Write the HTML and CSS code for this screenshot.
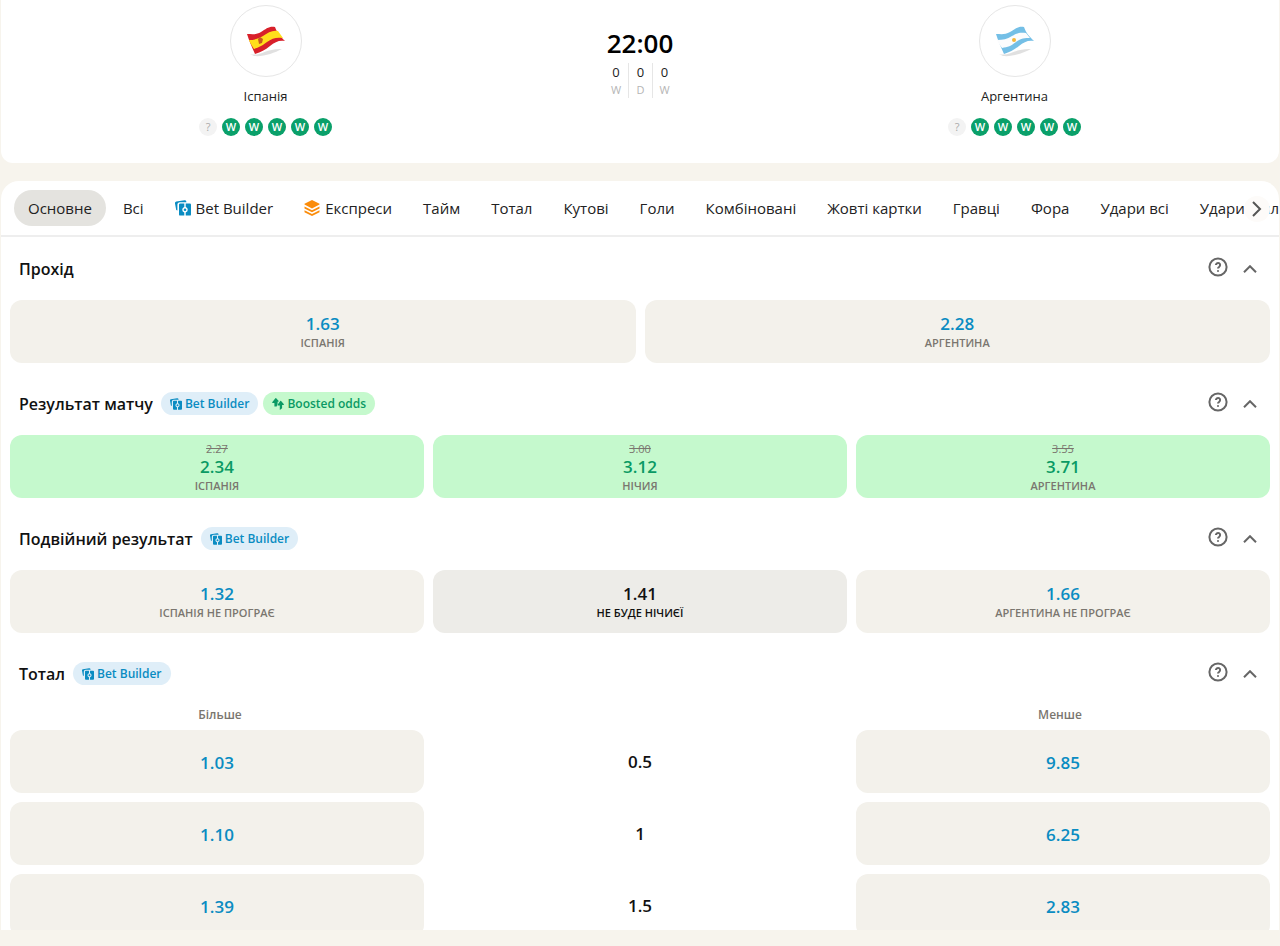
FILE: index.html
```
<!DOCTYPE html>
<html lang="uk">
  <head>
    <meta charset="UTF-8" />
    <meta name="viewport" content="width=device-width, initial-scale=1.0" />
    <title>Іспанія – Аргентина</title>
    <link rel="stylesheet" href="styles.css">
  </head>
  <body>
    <!-- Shared icons -->
    <svg class="sprite" aria-hidden="true">
      <symbol id="icon-builder" viewBox="0 0 16 16">
        <path d="M2.400 10.600 1.200 10 0 3.400A1.600 1.600 0 0 1 1.300 1.600L9.500.2a1.600 1.600 0 0 1 1.800 1.200l.1.800H5a2.600 2.600 0 0 0-2.600 2.600z" />
        <path d="M9.300 3.600H5.200a1.200 1.200 0 0 0-1.200 1.200v9.600a1.200 1.200 0 0 0 1.200 1.200h4.100v-3.200a2.800 2.800 0 0 1 0-5.400z" />
        <path d="M10.700 3.600h4.100a1.200 1.200 0 0 1 1.200 1.200v9.600a1.200 1.200 0 0 1-1.200 1.200h-4.100v-3.200a2.800 2.800 0 0 0 0-5.400z" />
        <circle cx="10" cy="9.700" r="1.300" />
      </symbol>
      <symbol id="icon-layers" viewBox="0 0 16 16">
        <path d="M8 0 15.500 3.800v.8L8 8.400.5 4.600v-.8z" />
        <path d="M.5 6.400 8 10.200l7.500-3.800v2L8 12.200.5 8.400z" />
        <path d="M.5 10.200 8 14l7.500-3.800v2L8 16 .5 12.200z" />
      </symbol>
      <symbol id="icon-boost" viewBox="0 0 12 12">
        <path d="M3.400.3a.6.600 0 0 1 .8 0l2.300 2.500c.4.500.2 1-.4 1H5.600V5.500L4.700 8.600H2.400V5H.9c-.7 0-.9-.600-.5-1.100z" />
        <path d="M8.300 3a.6.600 0 0 1 .8 0l2.600 3c.4.500.2 1.100-.5 1.100h-1.100v3.200l-2.300 1.600V7.600H6c-.5 0-.7-.500-.3-1z" />
      </symbol>
      <symbol id="icon-help" viewBox="0 0 20 20">
        <circle cx="10" cy="10" r="8.600" />
        <path d="M7.900 8.100a2.100 2.100 0 1 1 3.300 1.700c-.8.500-1.200.9-1.200 1.700M10 13.200v1.600" />
      </symbol>
      <symbol id="icon-up" viewBox="0 0 14 8">
        <path d="M1 7.200 7 1.200l6 6" />
      </symbol>
    </svg>

    <!-- Match header -->
    <header class="match">
      <div class="team">
        <div class="flag">
          <svg viewBox="0 0 40 32" width="40" height="32" aria-hidden="true">
            <path class="flag-shadow" d="M4 29c10 3 16-6 32-5-8 4-18 8-28 7z" />
            <path fill="#d8202a" d="M1 9C6 9 10 10 15 7S23 1 29 2c2 6 5 9 10 14-6-1-10 1-15 5s-9 6-15 8C6 22 3 16 1 9z" />
            <path fill="#ffdf1b" d="M3 15C8 15 12 14 17 11S26 5 32 6l5 7C31 12 26 13 21 17s-8 5-13 7c-2-3-4-6-5-9z" />
            <path fill="#c9581f" d="M12 14l2-2 3 2-1 4-3 1z" />
          </svg>
        </div>
        <h2 class="team-name">Іспанія</h2>
        <div class="form">
          <span class="unknown">?</span><span>W</span><span>W</span><span>W</span><span>W</span><span>W</span>
        </div>
      </div>

      <div class="kickoff">
        <time class="time">22:00</time>
        <dl class="history">
          <div><dt>W</dt><dd>0</dd></div>
          <div><dt>D</dt><dd>0</dd></div>
          <div><dt>W</dt><dd>0</dd></div>
        </dl>
      </div>

      <div class="team">
        <div class="flag">
          <svg viewBox="0 0 40 32" width="40" height="32" aria-hidden="true">
            <path class="flag-shadow" d="M4 29c10 3 16-6 32-5-8 4-18 8-28 7z" />
            <path fill="#74bfe6" d="M1 9C6 9 10 10 15 7S23 1 29 2c2 6 5 9 10 14-6-1-10 1-15 5s-9 6-15 8C6 22 3 16 1 9z" />
            <path fill="#fbfcfd" d="M2 15C8 15 12 14 17 11S25 7 31 8l4 5C30 13 26 13 21 17s-8 5-14 6c-2-3-4-5-5-8z" />
            <circle cx="19" cy="15" r="2" fill="#f5b73c" />
          </svg>
        </div>
        <h2 class="team-name">Аргентина</h2>
        <div class="form">
          <span class="unknown">?</span><span>W</span><span>W</span><span>W</span><span>W</span><span>W</span>
        </div>
      </div>
    </header>

    <main class="panel">
      <!-- Market tabs -->
      <nav class="tabs">
        <div class="tab-list">
          <button class="tab active">Основне</button>
          <button class="tab">Всі</button>
          <button class="tab"><svg class="icon-blue"><use href="#icon-builder" /></svg>Bet Builder</button>
          <button class="tab"><svg class="icon-orange"><use href="#icon-layers" /></svg>Експреси</button>
          <button class="tab">Тайм</button>
          <button class="tab">Тотал</button>
          <button class="tab">Кутові</button>
          <button class="tab">Голи</button>
          <button class="tab">Комбіновані</button>
          <button class="tab">Жовті картки</button>
          <button class="tab">Гравці</button>
          <button class="tab">Фора</button>
          <button class="tab">Удари всі</button>
          <button class="tab">Удари в площину</button>
        </div>
        <button class="next" aria-label="Далі">
          <svg viewBox="0 0 10 16" width="10" height="16"><path d="M1 1l7 7-7 7" /></svg>
        </button>
      </nav>

      <section class="market">
        <div class="market-head">
          <h3>Прохід</h3>
          <button class="help" aria-label="Довідка"><svg><use href="#icon-help" /></svg></button>
          <button class="toggle" aria-label="Згорнути"><svg><use href="#icon-up" /></svg></button>
        </div>
        <div class="odds two">
          <button class="odd"><b>1.63</b><small>ІСПАНІЯ</small></button>
          <button class="odd"><b>2.28</b><small>АРГЕНТИНА</small></button>
        </div>
      </section>

      <section class="market">
        <div class="market-head">
          <h3>Результат матчу</h3>
          <span class="tag"><svg><use href="#icon-builder" /></svg>Bet Builder</span>
          <span class="tag boost"><svg><use href="#icon-boost" /></svg>Boosted odds</span>
          <button class="help" aria-label="Довідка"><svg><use href="#icon-help" /></svg></button>
          <button class="toggle" aria-label="Згорнути"><svg><use href="#icon-up" /></svg></button>
        </div>
        <div class="odds">
          <button class="odd boosted"><s>2.27</s><b>2.34</b><small>ІСПАНІЯ</small></button>
          <button class="odd boosted"><s>3.00</s><b>3.12</b><small>НІЧИЯ</small></button>
          <button class="odd boosted"><s>3.55</s><b>3.71</b><small>АРГЕНТИНА</small></button>
        </div>
      </section>

      <section class="market">
        <div class="market-head">
          <h3>Подвійний результат</h3>
          <span class="tag"><svg><use href="#icon-builder" /></svg>Bet Builder</span>
          <button class="help" aria-label="Довідка"><svg><use href="#icon-help" /></svg></button>
          <button class="toggle" aria-label="Згорнути"><svg><use href="#icon-up" /></svg></button>
        </div>
        <div class="odds">
          <button class="odd"><b>1.32</b><small>ІСПАНІЯ НЕ ПРОГРАЄ</small></button>
          <button class="odd hovered"><b>1.41</b><small>НЕ БУДЕ НІЧИЄЇ</small></button>
          <button class="odd"><b>1.66</b><small>АРГЕНТИНА НЕ ПРОГРАЄ</small></button>
        </div>
      </section>

      <section class="market">
        <div class="market-head">
          <h3>Тотал</h3>
          <span class="tag"><svg><use href="#icon-builder" /></svg>Bet Builder</span>
          <button class="help" aria-label="Довідка"><svg><use href="#icon-help" /></svg></button>
          <button class="toggle" aria-label="Згорнути"><svg><use href="#icon-up" /></svg></button>
        </div>
        <div class="labels">
          <span>Більше</span>
          <span></span>
          <span>Менше</span>
        </div>
        <div class="odds">
          <button class="odd"><b>1.03</b></button>
          <span class="line">0.5</span>
          <button class="odd"><b>9.85</b></button>
          <button class="odd"><b>1.10</b></button>
          <span class="line">1</span>
          <button class="odd"><b>6.25</b></button>
          <button class="odd"><b>1.39</b></button>
          <span class="line">1.5</span>
          <button class="odd"><b>2.83</b></button>
        </div>
      </section>
    </main>
  </body>
</html>
```
FILE: styles.css
```
* {
  box-sizing: border-box;
  margin: 0;
  padding: 0;
}

body {
  height: 100vh;
  padding: 0 1px 16px;
  display: flex;
  flex-direction: column;
  gap: 18px;
  font-family: "Open Sans", "Noto Sans", sans-serif;
  color: #222;
  background-color: #f7f4ed;
  overflow: hidden;
}

button {
  font: inherit;
  color: inherit;
  border: none;
  background: none;
  cursor: pointer;
}

.sprite {
  display: none;
}

/* Match header */
.match {
  flex: none;
  display: grid;
  grid-template-columns: 1fr 220px 1fr;
  padding: 5px 0 27px;
  background-color: #fff;
  border-radius: 0 0 12px 12px;
}

.team {
  display: flex;
  flex-direction: column;
  align-items: center;
}

.flag {
  width: 72px;
  height: 72px;
  display: flex;
  align-items: center;
  justify-content: center;
  border: 1px solid #e6e6e6;
  border-radius: 50%;
}

.flag-shadow {
  fill: #000;
  opacity: 0.12;
}

.team-name {
  margin: 10px 0 12px;
  font-size: 13px;
  line-height: 19px;
  font-weight: 400;
}

.form {
  display: flex;
  gap: 5px;
}

.form span {
  width: 18px;
  height: 18px;
  border-radius: 50%;
  background-color: #0aa06a;
  color: #fff;
  font-size: 11px;
  line-height: 18px;
  font-weight: 600;
  text-align: center;
}

.form .unknown {
  background-color: #f3f3f3;
  color: #aaa;
  font-weight: 400;
}

.kickoff {
  display: flex;
  flex-direction: column;
  align-items: center;
  padding-top: 21px;
}

.time {
  font-size: 26px;
  line-height: 34px;
  font-weight: 600;
  color: #000;
}

.history {
  display: flex;
  margin-top: 3px;
}

.history div {
  width: 24px;
  display: flex;
  flex-direction: column-reverse;
  text-align: center;
}

.history div + div {
  border-left: 1px solid #e6e6e6;
}

.history dd {
  font-size: 13px;
  line-height: 18px;
}

.history dt {
  font-size: 11px;
  line-height: 17px;
  color: #b5b5b5;
}

/* Panel with markets */
.panel {
  flex: 1;
  min-height: 0;
  background-color: #fff;
  border-radius: 18px 18px 0 0;
  overflow: hidden;
}

.tabs {
  position: relative;
  border-bottom: 2px solid #eee;
}

.tab-list {
  display: flex;
  gap: 3px;
  padding: 9px 0 9px 13px;
  overflow: hidden;
}

.tab {
  flex: none;
  display: flex;
  align-items: center;
  gap: 5px;
  height: 36px;
  padding: 0 14px;
  border-radius: 18px;
  font-size: 15px;
  white-space: nowrap;
}

.tab.active {
  background-color: #e4e3df;
}

.tab svg {
  width: 16px;
  height: 16px;
}

.icon-blue {
  fill: #0a8cc2;
}

.icon-orange {
  fill: #fb8c0a;
}

.next {
  position: absolute;
  top: 15px;
  right: 9px;
  width: 26px;
  height: 26px;
  display: flex;
  align-items: center;
  justify-content: center;
  border-radius: 50%;
  background-color: #fdfbf9;
}

.next svg {
  fill: none;
  stroke: #555;
  stroke-width: 2;
}

.market {
  padding: 0 9px 9px;
}

.market-head {
  display: flex;
  align-items: center;
  gap: 5px;
  height: 63px;
  padding: 0 13px 0 9px;
}

.market-head h3 {
  margin-right: 3px;
  font-size: 16px;
  font-weight: 600;
  color: #111;
}

.tag {
  display: flex;
  align-items: center;
  gap: 3px;
  height: 23px;
  padding: 0 9px;
  border-radius: 12px;
  background-color: #dfeef8;
  color: #0a8cc2;
  fill: currentColor;
  font-size: 12px;
  font-weight: 600;
}

.tag svg {
  width: 12px;
  height: 12px;
}

.tag.boost {
  background-color: #c5f9cd;
  color: #0a9a64;
}

.help,
.toggle {
  display: flex;
  fill: none;
  stroke: #666;
  stroke-width: 2;
}

.help {
  margin: 0 10px 4px auto;
}

.help svg {
  width: 20px;
  height: 20px;
}

.toggle svg {
  width: 14px;
  height: 8px;
}

.odds {
  display: grid;
  grid-template-columns: repeat(3, 1fr);
  gap: 9px;
}

.odds.two {
  grid-template-columns: repeat(2, 1fr);
}

.odd {
  height: 63px;
  padding-top: 2px;
  display: flex;
  flex-direction: column;
  align-items: center;
  justify-content: center;
  border-radius: 12px;
  background-color: #f3f1eb;
  color: #0a8cc2;
}

.odd b,
.line {
  font-size: 17px;
  line-height: 20px;
  font-weight: 600;
}

.odd small {
  font-size: 11px;
  line-height: 17px;
  font-weight: 600;
  color: #7a766f;
}

.odd s {
  font-size: 11px;
  line-height: 17px;
  color: #7a766f;
}

.odd.boosted {
  padding-top: 0;
  background-color: #c5f9cd;
  color: #0a9a64;
}

.odd.hovered {
  background-color: #edece8;
}

.odd.hovered,
.odd.hovered small {
  color: #111;
}

.labels {
  display: grid;
  grid-template-columns: repeat(3, 1fr);
  height: 25px;
  font-size: 12px;
  line-height: 19px;
  font-weight: 600;
  color: #7a766f;
  text-align: center;
}

.line {
  align-self: center;
  text-align: center;
  color: #111;
}
```
